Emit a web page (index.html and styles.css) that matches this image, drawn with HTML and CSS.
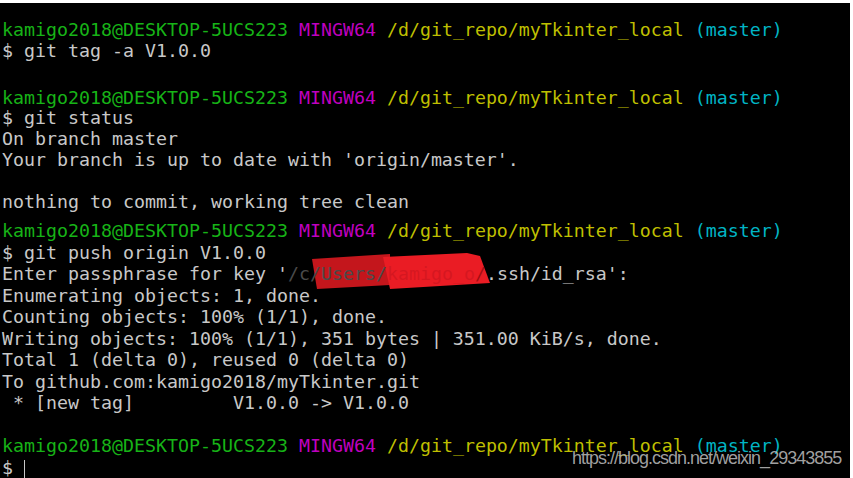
FILE: index.html
```html
<!DOCTYPE html>
<html>
<head>
<meta charset="utf-8">
<link rel="stylesheet" href="styles.css">
</head>
<body>
<div class="screen">
  <div class="topbar"></div>
  <div class="row">
    <div class="term">
      <div class="block b1">
        <div class="ln"><span class="g">kamigo2018@DESKTOP-5UCS223</span> <span class="m">MINGW64</span> <span class="y">/d/git_repo/myTkinter_local</span> <span class="c">(master)</span></div>
        <div class="ln">$ git tag -a V1.0.0</div>
        <div class="ln"> </div>
      </div>
      <div class="block b1b">
        <div class="ln"><span class="g">kamigo2018@DESKTOP-5UCS223</span> <span class="m">MINGW64</span> <span class="y">/d/git_repo/myTkinter_local</span> <span class="c">(master)</span></div>
        <div class="ln">$ git status</div>
        <div class="ln">On branch master</div>
        <div class="ln">Your branch is up to date with 'origin/master'.</div>
        <div class="ln"> </div>
        <div class="ln">nothing to commit, working tree clean</div>
      </div>
      <div class="block b2">
        <div class="ln"><span class="g">kamigo2018@DESKTOP-5UCS223</span> <span class="m">MINGW64</span> <span class="y">/d/git_repo/myTkinter_local</span> <span class="c">(master)</span></div>
        <div class="ln">$ git push origin V1.0.0</div>
        <div class="ln">Enter passphrase for key '<span class="dim">/c/Users/</span><span class="hid">kamigo_o</span><span class="dim2">/</span>.ssh/id_rsa':</div>
        <div class="ln">Enumerating objects: 1, done.</div>
        <div class="ln">Counting objects: 100% (1/1), done.</div>
        <div class="ln">Writing objects: 100% (1/1), 351 bytes | 351.00 KiB/s, done.</div>
        <div class="ln">Total 1 (delta 0), reused 0 (delta 0)</div>
        <div class="ln">To github.com:kamigo2018/myTkinter.git</div>
        <div class="ln"> * [new tag]         V1.0.0 -&gt; V1.0.0</div>
        <div class="ln"> </div>
        <div class="ln"><span class="g">kamigo2018@DESKTOP-5UCS223</span> <span class="m">MINGW64</span> <span class="y">/d/git_repo/myTkinter_local</span> <span class="c">(master)</span></div>
        <div class="ln">$ <span class="cursor"></span></div>
      </div>
    </div>
    <div class="edge"></div>
  </div>
  <svg class="redact" width="853" height="478" viewBox="0 0 853 478">
    <polygon points="312,259 390,254 390,285 317,289" fill="#c4161c"/>
    <polygon points="383,257 467,253 480,256 490,283 390,289" fill="#ea1c24"/>
  </svg>
  <div class="wm">https://blog.csdn.net/weixin_29343855</div>
</div>
</body>
</html>
```

FILE: styles.css
```css
html, body {
  margin: 0;
  padding: 0;
  background: #000;
}

.screen {
  position: relative;
  width: 853px;
  height: 478px;
  overflow: hidden;
  background: #000;
  display: flex;
  flex-direction: column;
}

.topbar {
  height: 3px;
  background: #fff;
  flex: none;
}

.row {
  flex: 1;
  display: flex;
}

.term {
  flex: 1;
  position: relative;
  z-index: 1;
  padding: 16px 0 0 2px;
  font-family: "DejaVu Sans Mono", monospace;
  font-size: 18.27px;
  color: #c8c8c8;
}

.edge {
  width: 3px;
  background: #fff;
  flex: none;
}

.block {
  line-height: 21.4px;
}

.b1b {
  margin-top: 4.3px;
  line-height: 20.8px;
}

.b2 {
  margin-top: 7.7px;
  line-height: 21.55px;
}

.ln {
  white-space: pre;
}

.g { color: #17b317; }
.m { color: #bf00bf; }
.y { color: #bfbf00; }
.c { color: #00b4c4; }

.dim { color: #4a4a4a; }
.dim2 { color: rgba(90, 0, 0, 0.5); }
.hid { color: rgba(200, 20, 30, 0.6); }

.cursor {
  display: inline-block;
  width: 1px;
  height: 20px;
  background: #c8c8c8;
  vertical-align: -6px;
}

.redact {
  position: absolute;
  left: 0;
  top: 0;
  z-index: 0;
}

.wm {
  position: absolute;
  z-index: 2;
  left: 572px;
  top: 448px;
  font-family: "Liberation Sans", Arial, sans-serif;
  font-size: 18px;
  letter-spacing: -1px;
  color: rgba(190, 190, 190, 0.85);
  white-space: nowrap;
}
```
